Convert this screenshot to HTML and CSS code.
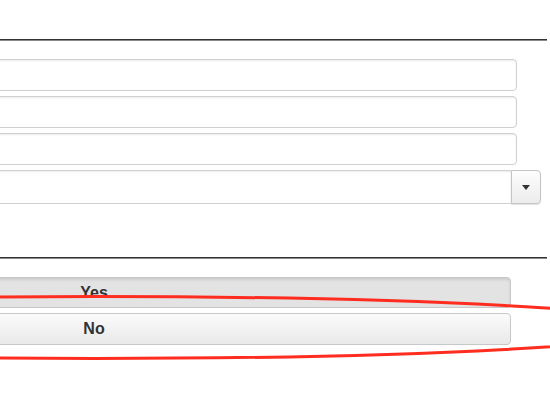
FILE: index.html
```html
<!DOCTYPE html>
<html>
<head lang="en">
    <meta charset="UTF-8">
    <title>Form</title>
    <link rel="stylesheet" href="styles.css">
</head>
<body>
<div class="page">
    <div class="rule"></div>
    <div class="fields">
        <input class="field" type="text">
        <input class="field" type="text">
        <input class="field" type="text">
        <div class="select">
            <div class="select-value"></div>
            <div class="select-btn"><span class="caret"></span></div>
        </div>
    </div>
    <div class="rule"></div>
    <div class="choices">
        <div class="btn active">Yes</div>
        <div class="btn">No</div>
    </div>
    <svg class="mark" width="550" height="400" viewBox="0 0 550 400">
        <ellipse cx="95" cy="327.5" rx="580" ry="31" fill="none" stroke="#ff2d1f" stroke-width="3"/>
    </svg>
</div>
</body>
</html>
```
FILE: styles.css
```css
*{padding: 0;margin: 0;box-sizing: border-box;}
body{background: #fff;font: 16px "Liberation Sans", Arial, sans-serif;color: #333;overflow: hidden;}
.page{width: 870px;margin-left: -323px;padding-top: 39px;}
.rule{height: 2px;background: #333;border-bottom: 1px solid #888;height: 2px;}
.fields{padding: 18px 0 0 0;height: 216px;}
.field{display: block;width: 840px;height: 32px;margin-bottom: 5px;border: 1px solid #d0d0d0;border-radius: 4px;background: #fff;box-shadow: inset 0 1px 2px rgba(0,0,0,.08);outline: none;}
.select{display: flex;width: 864px;height: 34px;}
.select-value{flex: 1;border: 1px solid #d0d0d0;border-right: none;border-radius: 4px 0 0 4px;box-shadow: inset 0 1px 2px rgba(0,0,0,.08);}
.select-btn{width: 30px;display: flex;align-items: center;justify-content: center;border: 1px solid #c4c4c4;border-radius: 0 4px 4px 0;background: linear-gradient(#fdfdfd, #ececec);box-shadow: 0 1px 1px rgba(0,0,0,.12);}
.caret{width: 0;height: 0;border-left: 4px solid transparent;border-right: 4px solid transparent;border-top: 5px solid #333;}
.choices{padding-top: 18px;}
.btn{width: 834px;height: 32px;margin-bottom: 5px;border: 1px solid #c8c8c8;border-radius: 4px;background: linear-gradient(#fbfbfb, #e9e9e9);text-align: center;line-height: 30px;font-weight: bold;font-size: 16px;color: #333;}
.btn.active{height: 31px;margin-bottom: 5px;background: #e3e3e3;box-shadow: inset 0 2px 3px rgba(0,0,0,.1);line-height: 29px;}
.mark{position: absolute;left: 0;top: 0;pointer-events: none;}
```
